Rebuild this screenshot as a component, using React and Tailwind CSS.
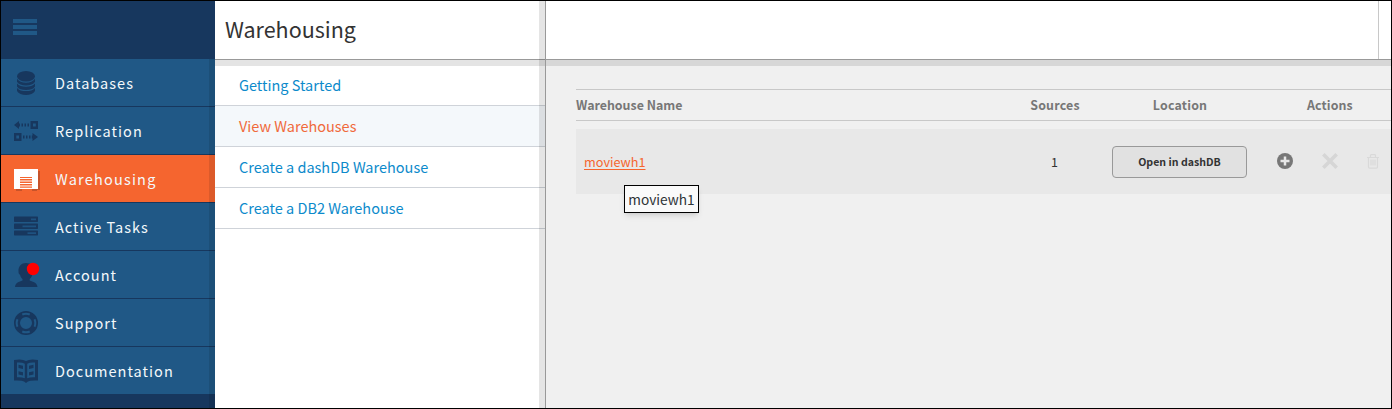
const DARK = "#17375e";

function DatabaseIcon() {
  return (
    <svg width="26" height="26" viewBox="0 0 26 26" fill={DARK}>
      <ellipse cx="13" cy="6.2" rx="9" ry="5.2" />
      <path d="M4 8.700c2 2.900 5 4 9 4s7-1.100 9-4v3.100c-1.500 2.600-5 3.700-9 3.700s-7.500-1.100-9-3.700z" />
      <path d="M4 13.500c2 2.500 5 3.200 9 3.200s7-.7 9-3.200v2.900c-1.500 2.600-5 3.500-9 3.500s-7.500-.9-9-3.500z" />
      <path d="M4 18c2 2.500 5 3.100 9 3.100s7-.6 9-3.100v3c-1.500 2.700-5 4-9 4s-7.500-1.300-9-4z" />
    </svg>
  );
}

function ReplicationIcon() {
  return (
    <svg width="26" height="26" viewBox="0 0 26 26" fill={DARK}>
      <path d="M1 7l5-4v8z" />
      <path d="M5.500 5.500H7v3H5.500zM8.500 5.500h1.500v3H8.500zM11.500 5.500H13v3h-1.500zM14.500 5.500H16v3h-1.500z" />
      <path fillRule="evenodd" d="M17.500 3H25v8h-7.500zM20 5.500v3h2.800v-3z" />
      <path fillRule="evenodd" d="M1 15h7.500v8H1zM3.300 17.500v3H6v-3z" />
      <path d="M10 17.500h1.500v3H10zM13 17.500h1.500v3H13zM16 17.500h1.500v3H16zM18.800 17.500h1.500v3h-1.500z" />
      <path d="M25 19l-5.500-4v8z" />
    </svg>
  );
}

function WarehouseIcon() {
  return (
    <svg width="28" height="26" viewBox="0 0 28 26">
      <path d="M3 5h24v19h-3v1h-5v-2H9v2H3z" fill="#c8532a" />
      <path d="M7 11h12v12.200H7z" fill="#f5652f" />
      <path d="M1 3h24v20h-6V11H7v12H1z" fill="#fff" />
      <path d="M7 12.500h12M7 15h12M7 17.500h12M7 20h12M7 22.400h12" stroke="#fff" strokeWidth="1.200" />
    </svg>
  );
}

function TasksIcon() {
  return (
    <svg width="26" height="26" viewBox="0 0 26 26" fill={DARK}>
      <rect x="1" y="2.500" width="24" height="5.500" rx=".7" />
      <rect x="1" y="9.500" width="24" height="5.500" rx=".7" />
      <rect x="1" y="16.500" width="24" height="5" rx=".7" />
      <path d="M18 5.300h5M9.500 12.300H23M14.500 19.200H23" stroke="#1e5280" strokeWidth="1.700" />
    </svg>
  );
}

function AccountIcon() {
  return (
    <svg width="28" height="26" viewBox="0 1 28 26" fill={DARK}>
      <path d="M13 2c4.600 0 7.500 2.800 7.500 7 0 1-.1 1.500.2 2.400 0 1.600-1 2.200-1.500 2.600-.6 2.200-1.500 3-2.500 4v1.500c3.300 1.200 7.300 2.200 7.800 6.500H2c.5-4.300 4-5.300 7.500-6.500V18c-1.200-1-2-2.200-2.400-4-1-.6-1.700-1.600-1.600-3.400C5.200 5 8.500 2 13 2z" />
      <circle cx="20" cy="8" r="6.200" fill="red" />
    </svg>
  );
}

function SupportIcon() {
  return (
    <svg width="26" height="26" viewBox="0 0 26 26" fill="none">
      <circle cx="13" cy="13" r="9" stroke={DARK} strokeWidth="6" />
      <circle
        cx="13"
        cy="13"
        r="9.300"
        stroke="#205886"
        strokeWidth="2"
        pathLength="360"
        strokeDasharray="48 42"
        strokeDashoffset="24"
      />
    </svg>
  );
}

function DocumentationIcon() {
  return (
    <svg width="26" height="26" viewBox="0 0 26 26">
      <path d="M1 2q8-1.500 12 1 4-2.500 12-1v20.500q-8-.4-10.500 1.200L13 25l-1.500-1.300Q9 22.100 1 22.500z" fill={DARK} />
      <path
        d="M4 4.500q5-.5 7.800 1.300v14.500Q9 18.900 4 19.200zM22 4.500q-5-.5-7.800 1.300v14.500q2.800-1.400 7.800-1.100z"
        fill="#205886"
      />
      <path
        d="M5.500 6.800l4.500 1v3.200l-4.500-1zM5.500 13.300l4.500 1v3.200l-4.500-1zM20.500 6.800l-4.500 1v3.200l4.500-1zM20.500 13.300l-4.500 1v3.200l4.500-1z"
        fill={DARK}
      />
    </svg>
  );
}

const NAV = [
  { label: "Databases", Icon: DatabaseIcon },
  { label: "Replication", Icon: ReplicationIcon },
  { label: "Warehousing", Icon: WarehouseIcon, active: true },
  { label: "Active Tasks", Icon: TasksIcon },
  { label: "Account", Icon: AccountIcon },
  { label: "Support", Icon: SupportIcon },
  { label: "Documentation", Icon: DocumentationIcon },
];

function Sidebar() {
  return (
    <nav className="flex w-[214px] shrink-0 flex-col bg-[#17375e]">
      <div className="h-[58px] shrink-0 px-3 pt-[18px]">
        <div className="flex w-6 flex-col gap-[2px]">
          <span className="h-1 bg-[#205886]" />
          <span className="h-1 bg-[#205886]" />
          <span className="h-1 bg-[#205886]" />
        </div>
      </div>
      <div className="relative flex-1">
        {NAV.map(({ label, Icon, active }) => (
          <div
            key={label}
            className={`flex h-12 items-center border-b border-[#17375e] pl-3 ${active ? "bg-[#f5652f]" : "bg-[#205886]"}`}
          >
            <span className="flex w-[42px] shrink-0 self-start pt-[11px]">
              <Icon />
            </span>
            <span
              className={`text-[14.5px] leading-6 text-[#f4f8fb] ${active ? "tracking-[1.2px]" : "tracking-[1.03px]"}`}
            >
              {label}
            </span>
          </div>
        ))}
        <div className="absolute inset-y-0 right-0 w-1.5 bg-black/10" />
      </div>
    </nav>
  );
}

const LINKS = ["Getting Started", "View Warehouses", "Create a dashDB Warehouse", "Create a DB2 Warehouse"];

function WarehouseMenu() {
  return (
    <aside className="relative flex w-[331px] shrink-0 flex-col border-r border-[#999] bg-white">
      <h1 className="flex h-[59px] shrink-0 items-center border-b border-[#999] pb-0.5 pl-2.5 text-[21.5px] text-[#333]">
        Warehousing
      </h1>
      <div className="h-1.5 shrink-0 bg-[#e4e4e4]" />
      {LINKS.map((link, i) => (
        <a
          key={link}
          className={`flex shrink-0 items-center border-b border-[#cfd3d9] pl-6 text-[14.5px] leading-5 ${
            i === 0 ? "h-10 pb-px" : "h-[41px]"
          } ${i === 1 ? "bg-[#f4f8fb] text-[#f06a3c]" : "text-[#0c8acb]"}`}
        >
          {link}
        </a>
      ))}
      <div className="absolute inset-y-0 right-0 w-1.5 bg-black/10" />
    </aside>
  );
}

function Main() {
  return (
    <main className="flex min-w-0 flex-1 flex-col bg-[#f0f0f0]">
      <div className="flex h-[59px] shrink-0 justify-end border-b border-[#999] bg-white">
        <div className="w-[13px] border-l border-[#c8c8c8]" />
      </div>
      <div className="h-1.5 shrink-0 bg-[#d7d7d7]" />
      <section className="relative ml-[30px] mt-[23px]">
        <div className="flex h-8 items-center border-y border-[#c8c8c8] text-[12.4px] font-bold text-[#777]">
          <span className="w-[414px]">Warehouse Name</span>
          <span className="w-[130px] text-center tracking-[0.2px]">Sources</span>
          <span className="w-[120px] text-center tracking-[0.2px]">Location</span>
          <span className="flex-1 pl-[67px] tracking-[0.1px]">Actions</span>
        </div>
        <div className="mt-2 flex h-[65px] items-center bg-[#e8e8e8]">
          <a className="w-[414px] pl-2 text-[12.7px] text-[#f5652f] underline underline-offset-2">moviewh1</a>
          <span className="w-[122px] pl-[7px] pt-0.5 text-center text-[12.5px] text-[#333]">1</span>
          <button className="h-8 w-[135px] rounded border border-[#999] bg-[#e1e1e1] text-[10.6px] font-bold text-[#333]">
            Open in dashDB
          </button>
          <div className="-mt-px flex items-center pl-[30px]">
            <svg width="16" height="16" viewBox="0 0 16 16">
              <circle cx="8" cy="8" r="8" fill="#777" />
              <path d="M8 3.500v9M3.500 8h9" stroke="#e8e8e8" strokeWidth="2.500" />
            </svg>
            <svg className="ml-[29px]" width="16" height="16" viewBox="0 0 16 16">
              <path d="M1.300 1.300l13.400 13.400M14.700 1.300L1.300 14.700" stroke="#d6d6d6" strokeWidth="3.600" />
            </svg>
            <svg className="ml-[29px]" width="12" height="15" viewBox="0 0 12 15" fill="none" stroke="#d9d9d9">
              <path
                d="M0 3.500h12M3.500 3V1.500q0-.8.800-.8h3.400q.8 0 .8.800V3M1.500 4v9q0 1.200 1.200 1.200h6.600q1.200 0 1.200-1.200V4M4 5.500v6M6 5.500v6M8 5.500v6"
                strokeWidth="1.200"
              />
            </svg>
          </div>
        </div>
        <div className="absolute left-12 top-24 flex h-7 w-[75px] items-center justify-center border border-black bg-[#fafafa] text-[13.7px] text-[#2e3436] shadow-md">
          moviewh1
        </div>
      </section>
    </main>
  );
}

export default function App() {
  return (
    <div className="flex h-[409px] w-[1392px] overflow-hidden border border-black bg-white font-['Noto_Sans_CJK_JP',sans-serif]">
      <Sidebar />
      <WarehouseMenu />
      <Main />
    </div>
  );
}
